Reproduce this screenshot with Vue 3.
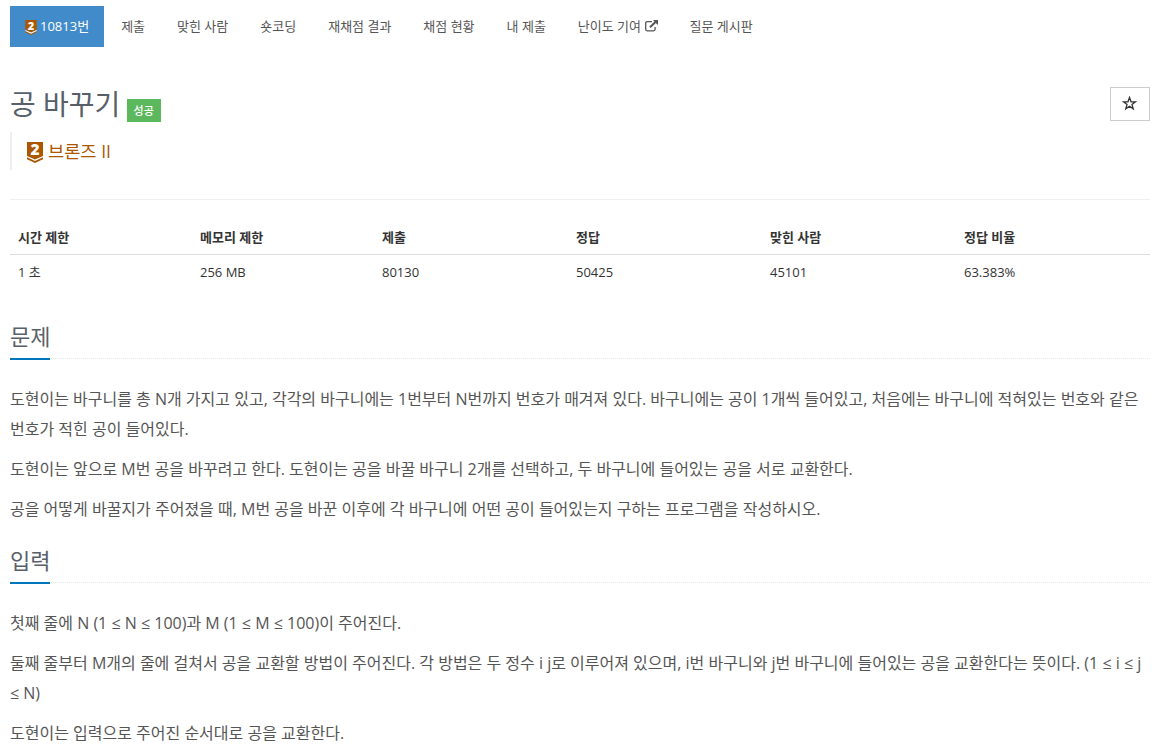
<template>
  <div class="container">
    <ul class="problem-menu">
      <li v-for="item in menu" :key="item.label" :class="{ active: item.active }">
        <a>
          <svg v-if="item.active" class="tier-small" viewBox="0 0 16 21">
            <path d="M0 0H16V14L8 18L0 14Z" fill="#ad5600" />
            <path d="M0 15.5L8 19.2L16 15.5V17.2L8 21L0 17.2Z" fill="#ad5600" />
            <path d="M0 14L8 17.6L16 14V15.5L8 19.2L0 15.5Z" fill="#fff" />
            <text x="8" y="13.3" text-anchor="middle">2</text>
          </svg>{{ item.label }}<svg v-if="item.external" class="external" viewBox="0 0 13 12">
            <path d="M7 1.6H2.2Q.7 1.6 .7 3.1V9.3Q.7 10.8 2.2 10.8H8.6Q10.1 10.8 10.1 9.3V7" />
            <path d="M5 7.2L11 1.5" class="arrow" />
            <path d="M8 0H13V5L11.3 3.4L9.6 1.7Z" class="head" />
          </svg>
        </a>
      </li>
    </ul>

    <div class="page-header">
      <h1>{{ title }} <span class="label">성공</span></h1>
      <button class="favorite">
        <svg viewBox="0 0 14 14">
          <path d="M7 1.4L8.4 5.4H12.6L9.3 7.9L10.5 12L7 9.6L3.5 12L4.7 7.9L1.4 5.4H5.6Z" />
        </svg>
      </button>
    </div>

    <blockquote>
      <svg class="tier" viewBox="0 0 16 21">
        <path d="M0 0H16V14L8 17.5L0 14Z" fill="#ad5600" />
        <path d="M0 15.3L8 19L16 15.3V17.2L8 21L0 17.2Z" fill="#ad5600" />
        <text x="8" y="13.3" text-anchor="middle">2</text>
      </svg>
      <span>브론즈 II</span>
    </blockquote>

    <table>
      <thead>
        <tr>
          <th v-for="col in info" :key="col.name" :style="{ width: col.width }">{{ col.name }}</th>
        </tr>
      </thead>
      <tbody>
        <tr>
          <td v-for="col in info" :key="col.name">{{ col.value }}</td>
        </tr>
      </tbody>
    </table>

    <section v-for="section in sections" :key="section.title">
      <div class="headline">
        <h2>{{ section.title }}</h2>
      </div>
      <div class="problem-text">
        <p v-for="(text, i) in section.paragraphs" :key="i">{{ text }}</p>
      </div>
    </section>
  </div>
</template>

<script setup>
const title = '공 바꾸기'

const menu = [
  { label: '10813번', active: true },
  { label: '제출' },
  { label: '맞힌 사람' },
  { label: '숏코딩' },
  { label: '재채점 결과' },
  { label: '채점 현황' },
  { label: '내 제출' },
  { label: '난이도 기여', external: true },
  { label: '질문 게시판' }
]

const info = [
  { name: '시간 제한', value: '1 초', width: '182px' },
  { name: '메모리 제한', value: '256 MB', width: '182px' },
  { name: '제출', value: '80130', width: '194px' },
  { name: '정답', value: '50425', width: '194px' },
  { name: '맞힌 사람', value: '45101', width: '194px' },
  { name: '정답 비율', value: '63.383%', width: '194px' }
]

const sections = [
  {
    title: '문제',
    paragraphs: [
      '도현이는 바구니를 총 N개 가지고 있고, 각각의 바구니에는 1번부터 N번까지 번호가 매겨져 있다. 바구니에는 공이 1개씩 들어있고, 처음에는 바구니에 적혀있는 번호와 같은 번호가 적힌 공이 들어있다.',
      '도현이는 앞으로 M번 공을 바꾸려고 한다. 도현이는 공을 바꿀 바구니 2개를 선택하고, 두 바구니에 들어있는 공을 서로 교환한다.',
      '공을 어떻게 바꿀지가 주어졌을 때, M번 공을 바꾼 이후에 각 바구니에 어떤 공이 들어있는지 구하는 프로그램을 작성하시오.'
    ]
  },
  {
    title: '입력',
    paragraphs: [
      '첫째 줄에 N (1 ≤ N ≤ 100)과 M (1 ≤ M ≤ 100)이 주어진다.',
      '둘째 줄부터 M개의 줄에 걸쳐서 공을 교환할 방법이 주어진다. 각 방법은 두 정수 i j로 이루어져 있으며, i번 바구니와 j번 바구니에 들어있는 공을 교환한다는 뜻이다. (1 ≤ i ≤ j ≤ N)',
      '도현이는 입력으로 주어진 순서대로 공을 교환한다.'
    ]
  }
]
</script>

<style>
body {
  margin: 0;
  background: #fff;
  overflow: hidden;
}
</style>

<style scoped>
.container {
  box-sizing: border-box;
  width: 1140px;
  height: 751px;
  margin-left: 10px;
  padding-top: 6px;
  overflow: hidden;
  font-family: "Open Sans", "Noto Sans CJK KR", sans-serif;
  font-size: 13px;
  line-height: 21px;
  color: #333;
}

.problem-menu {
  display: flex;
  gap: 2px;
  margin: 0;
  padding: 0;
  list-style: none;
}

.problem-menu a {
  display: flex;
  align-items: center;
  height: 41px;
  padding: 0 15px;
  color: #555;
  white-space: nowrap;
}

.problem-menu .active a {
  background: #428bca;
  color: #fff;
}

.tier-small {
  width: 12px;
  height: 15px;
  margin: 1px 3px 0 0;
  overflow: visible;
}

.tier-small text,
.tier text {
  font-family: "Open Sans", sans-serif;
  font-size: 15.5px;
  font-weight: 800;
  fill: #fff;
}

.external {
  width: 13px;
  height: 12px;
  margin: -1px 0 0 3.5px;
  fill: none;
  stroke: #555;
  stroke-width: 1.3;
}

.external .arrow {
  stroke-width: 2;
}

.external .head {
  fill: #555;
  stroke: none;
}

.page-header {
  display: flex;
  justify-content: space-between;
  height: 45px;
  margin-top: 40px;
}

h1 {
  margin: -1px 0 0;
  font-size: 28px;
  font-weight: 400;
  line-height: 36px;
  color: #585f69;
}

.label {
  display: inline-block;
  margin-left: -1px;
  padding: 0 7px;
  background: #5cb85c;
  color: #fff;
  font-size: 11px;
  font-weight: 500;
  line-height: 23px;
}

.favorite {
  display: flex;
  align-items: center;
  justify-content: center;
  width: 40px;
  height: 34px;
  padding: 0 2px 2px 0;
  border: 1px solid #ccc;
  background: #fff;
}

.favorite svg {
  width: 15px;
  height: 15px;
  fill: none;
  stroke: #333;
  stroke-width: 1.2;
}

blockquote {
  display: flex;
  align-items: center;
  box-sizing: border-box;
  height: 38px;
  margin: 0 0 29px;
  padding-left: 15px;
  border-left: 2px solid #eee;
  color: #ad5600;
  font-size: 17.6px;
}

.tier {
  width: 16px;
  height: 21px;
  margin: 2px 5px 0 0;
  overflow: visible;
}

table {
  width: 100%;
  border-top: 1px solid #eee;
  border-spacing: 0;
  table-layout: fixed;
}

th,
td {
  box-sizing: border-box;
  padding: 7px 8px 8px;
  text-align: left;
}

th {
  padding-top: 27px;
  padding-bottom: 6px;
  border-bottom: 1px solid #ddd;
  font-weight: 700;
}

.headline {
  display: flex;
  box-sizing: border-box;
  height: 41px;
  border-bottom: 1px dotted #e4e9f0;
}

section .headline {
  margin-bottom: 25px;
}

table + section {
  margin-top: 27px;
}

h2 {
  box-sizing: border-box;
  height: 42px;
  margin: 0;
  border-bottom: 2px solid #0076bd;
  font-size: 22px;
  font-weight: 400;
  line-height: 36px;
  color: #585f69;
}

section + section {
  margin-top: 18px;
}

.problem-text p {
  margin: 0 0 10px;
  font-size: 16px;
  line-height: 30px;
  color: #555;
}
</style>
